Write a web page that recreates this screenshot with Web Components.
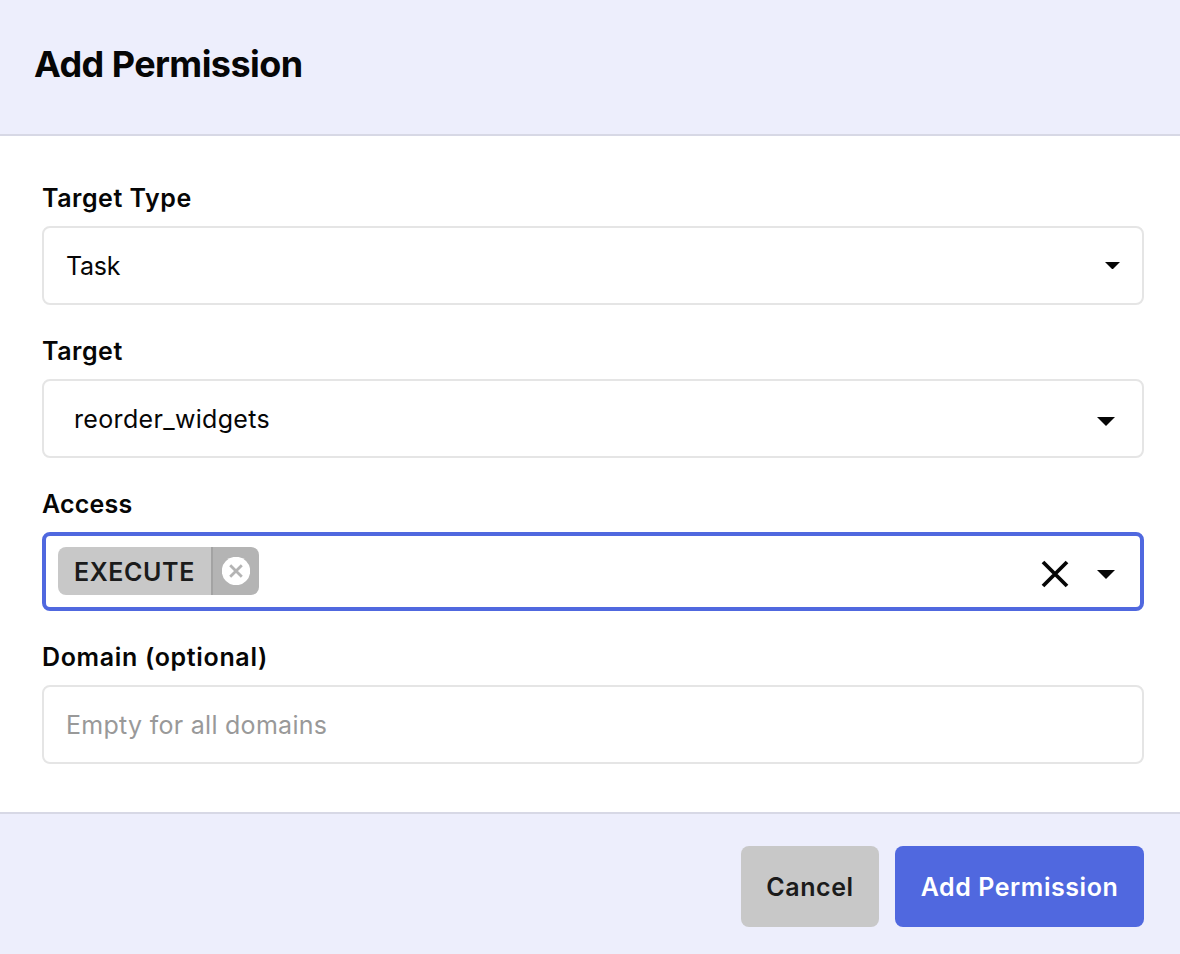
<!DOCTYPE html>
<html lang="en">
<head>
<meta charset="utf-8">
<title>Add Permission</title>
<style>
body { margin: 0; font-family: Inter, "Liberation Sans", sans-serif; color: #060606; background: #fff; }
</style>
</head>
<body>
<permission-dialog>
  <dialog-title slot="title">Add Permission</dialog-title>
  <form-field label="Target Type" style="--label-track:.52px">
    <select-box><box-text style="--track:-.25px">Task</box-text><caret-icon slot="end" size="small"></caret-icon></select-box>
  </form-field>
  <form-field label="Target" style="--label-track:.52px">
    <select-box inset><box-text style="--track:.33px">reorder_widgets</box-text><caret-icon slot="end"></caret-icon></select-box>
  </form-field>
  <form-field label="Access" style="--label-track:.2px">
    <select-box focused><value-tag style="--track:.6px">EXECUTE</value-tag><clear-icon slot="end"></clear-icon><caret-icon slot="end"></caret-icon></select-box>
  </form-field>
  <form-field label="Domain (optional)" style="--label-track:.66px">
    <select-box><box-text placeholder style="--track:.28px">Empty for all domains</box-text></select-box>
  </form-field>
  <action-button slot="actions" style="--w:138px;--track:.55px">Cancel</action-button>
  <action-button slot="actions" primary style="--w:249px;--track:.56px">Add Permission</action-button>
</permission-dialog>
<script>
const define = (name, markup) => customElements.define(name, class extends HTMLElement {
  constructor() {
    super();
    this.attachShadow({ mode: "open" }).innerHTML = markup;
  }
  connectedCallback() {
    const label = this.shadowRoot.querySelector("label");
    if (label) label.textContent = this.getAttribute("label");
  }
});

define("permission-dialog", `
<style>
:host { display: flex; flex-direction: column; height: 954px; }
header, footer { box-sizing: border-box; background: #edeefc; flex: none; }
header { height: 136px; border-bottom: 2px solid #d7d8e5; padding: 39px 34px 0; }
main { flex: 1; display: flex; flex-direction: column; gap: 28px; padding: 44px 36px 0 42px; }
footer { height: 142px; border-top: 2px solid #d7d8e5; padding: 32px 36px 0; display: flex; justify-content: flex-end; gap: 16px; }
</style>
<header><slot name="title"></slot></header>
<main><slot></slot></main>
<footer><slot name="actions"></slot></footer>`);

define("dialog-title", `
<style>
:host { display: block; font-size: 36px; line-height: 50px; font-weight: 700; }
span { letter-spacing: var(--track, -.57px); }
</style><span><slot></slot></span>`);

define("form-field", `
<style>
:host { display: flex; flex-direction: column; gap: 10px; }
label { font-size: 25px; line-height: 36px; font-weight: 600; letter-spacing: var(--label-track, 0); white-space: nowrap; }
</style><label></label><slot></slot>`);

define("select-box", `
<style>
:host { display: flex; align-items: center; box-sizing: border-box; height: 79px; border: 2px solid #e5e5e5; border-radius: 8px; padding: 0 22.5px 0 22px; }
:host([inset]) { padding: 0 27px 0 30px; }
:host([focused]) { border: 4px solid #5068df; padding: 0 25px 0 12px; }
.end { margin-left: auto; display: flex; align-items: center; gap: 28px; }
</style><slot></slot><div class="end"><slot name="end"></slot></div>`);

define("box-text", `
<style>
:host { font-size: 25px; line-height: 36px; letter-spacing: var(--track, .2px); white-space: nowrap; }
:host([placeholder]) { color: #999; }
</style><slot></slot>`);

define("value-tag", `
<style>
:host { display: flex; height: 48px; width: 201px; border-radius: 8px; overflow: hidden; margin-bottom: 1px; }
span { box-sizing: border-box; width: 153px; padding-left: 16px; background: #c8c8c8; color: #1b1b1b; font-size: 25px; line-height: 50px; font-weight: 600; letter-spacing: var(--track, .2px); }
div { flex: 1; border-left: 2px solid #a3a3a3; background: #b4b4b4; display: flex; align-items: center; justify-content: center; }
svg { display: block; }
</style><span><slot></slot></span><div><svg width="28" height="28" viewBox="0 0 28 28"><circle cx="14" cy="14" r="14.2" fill="#fff"/><path d="M8.2 8.2 19.8 19.8M19.8 8.2 8.2 19.8" stroke="#b4b4b4" stroke-width="2.8"/></svg></div>`);

define("caret-icon", `
<style>
:host { display: block; width: 18px; height: 9px; margin-top: 5px; }
:host([size="small"]) { width: 15px; height: 7.5px; margin: 0; }
svg { display: block; width: 100%; height: 100%; }
</style><svg viewBox="0 0 18 9" preserveAspectRatio="none"><path d="M0 0H18L9 9Z" fill="#060606"/></svg>`);

define("clear-icon", `
<style>
:host { display: block; margin-top: 5px; }
svg { display: block; }
</style><svg width="28" height="28" viewBox="0 0 28 28"><path d="M2 2 26 26M26 2 2 26" stroke="#060606" stroke-width="3.8"/></svg>`);

define("action-button", `
<style>
:host { display: block; }
button { all: unset; box-sizing: border-box; width: var(--w); height: 81px; border-radius: 8px; background: #c8c8c8; color: #1b1b1b; text-align: center; font-size: 25px; font-weight: 600; letter-spacing: var(--track, .2px); white-space: nowrap; }
:host([primary]) button { background: #5068df; color: #fff; }
</style><button><slot></slot></button>`);
</script>
</body>
</html>
